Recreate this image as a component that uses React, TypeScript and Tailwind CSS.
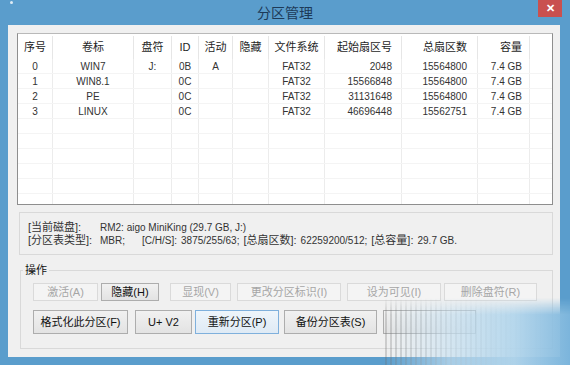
import React from "react";

const colClasses = [
  "w-[35px] justify-center",
  "w-[81px] justify-center",
  "w-[38px] justify-center",
  "w-[27px] justify-center",
  "w-[34px] justify-center",
  "w-[36px] justify-center",
  "w-[56px] justify-center",
  "w-[77px] justify-end pr-[9px]",
  "w-[76px] justify-end pr-[10px]",
  "w-[52px] justify-end pr-[7px]",
];

const headers = ["序号", "卷标", "盘符", "ID", "活动", "隐藏", "文件系统", "起始扇区号", "总扇区数", "容量"];

const rows = [
  ["0", "WIN7", "J:", "0B", "A", "", "FAT32", "2048", "15564800", "7.4 GB"],
  ["1", "WIN8.1", "", "0C", "", "", "FAT32", "15566848", "15564800", "7.4 GB"],
  ["2", "PE", "", "0C", "", "", "FAT32", "31131648", "15564800", "7.4 GB"],
  ["3", "LINUX", "", "0C", "", "", "FAT32", "46696448", "15562751", "7.4 GB"],
  ["", "", "", "", "", "", "", "", "", ""],
  ["", "", "", "", "", "", "", "", "", ""],
  ["", "", "", "", "", "", "", "", "", ""],
  ["", "", "", "", "", "", "", "", "", ""],
  ["", "", "", "", "", "", "", "", "", ""],
  ["", "", "", "", "", "", "", "", "", ""],
];

function Btn({
  label,
  w,
  h,
  kind = "normal",
}: {
  label: string;
  w: string;
  h: string;
  kind?: "normal" | "disabled" | "default";
}) {
  const look =
    kind === "disabled"
      ? "border-[#dadada] bg-[#f4f4f4] text-[#a6a6a6]"
      : kind === "default"
        ? "border-[#7fb0dc] bg-[linear-gradient(#eef5fb,#dfeaf5)] text-[#111]"
        : "border-[#adadad] bg-[linear-gradient(#f1f1f1,#e3e3e3)] text-[#111]";
  return (
    <button
      className={`${w} ${h} ${look} border flex items-center justify-center text-[11px] leading-none shrink-0`}
    >
      {label}
    </button>
  );
}

export default function App() {
  return (
    <div className="relative w-[570px] h-[365px] bg-[#5a9dcc] overflow-hidden font-['Liberation_Sans','Noto_Sans_CJK_SC',sans-serif] text-[#222]">
      {/* title bar */}
      <div className="h-[25px] grid grid-cols-[1fr_auto_1fr] items-start">
        <div className="pl-[10px] pt-[1px]">
          <div className="w-[3px] h-[3px] rounded-full bg-white/80" />
        </div>
        <div className="pt-[2px] text-[14px] leading-[20px] text-[#1d3a58] font-['Noto_Sans_CJK_SC',sans-serif]">
          分区管理
        </div>
        <div className="flex justify-end pr-[8px]">
          <div className="w-[24px] h-[17px] bg-[#c9504f] flex items-center justify-center text-white text-[11px] leading-none font-bold">
            ✕
          </div>
        </div>
      </div>

      {/* client area */}
      <div className="ml-[8px] mr-[10px] h-[332px] bg-[#f0f0f0] pl-[9px] pr-[7px] pt-[8px]">
        {/* list view */}
        <div className="h-[172px] border border-[#8e8e8e] border-t-[#b9b9b9] bg-white overflow-hidden">
          <div className="flex h-[25px] pt-[2px] text-[11px] text-[#1e1e1e]">
            {headers.map((h, i) => (
              <div key={i} className={`${colClasses[i]} flex items-center border-r border-[#e6e6e6]`}>
                {h}
              </div>
            ))}
            <div className="flex-1" />
          </div>
          {rows.map((r, ri) => (
            <div key={ri} className="flex h-[15px] text-[10px] text-[#333] border-b border-[#f4f4f4]">
              {r.map((c, ci) => (
                <div key={ci} className={`${colClasses[ci]} flex items-center border-r border-[#ececec]`}>
                  {c}
                </div>
              ))}
              <div className="flex-1" />
            </div>
          ))}
        </div>

        {/* disk info */}
        <div className="ml-[2px] mt-[7px] h-[43px] border border-[#d9d9d9] pl-[8px] pt-[8px] text-[11px] leading-[13px] text-[#333]">
          <div className="flex items-center whitespace-nowrap">
            <span className="w-[72px]">[当前磁盘]:</span>
            <span className="text-[10px]">RM2: aigo MiniKing (29.7 GB, J:)</span>
          </div>
          <div className="flex items-center whitespace-nowrap">
            <span className="w-[72px]">[分区表类型]:</span>
            <span className="w-[42px] text-[10px]">MBR;</span>
            <span className="text-[10px]">[C/H/S]:</span>
            <span className="text-[10px] ml-[4px]">3875/255/63;</span>
            <span className="ml-[4px]">[总扇区数]:</span>
            <span className="text-[10px] ml-[4px]">62259200/512;</span>
            <span className="ml-[4px]">[总容量]:</span>
            <span className="text-[10px] ml-[4px]">29.7 GB.</span>
          </div>
        </div>

        {/* operations */}
        <fieldset className="ml-[3px] mt-[8px] h-[86px] border border-[#d9d9d9] pl-[12px] pt-[6px]">
          <legend className="-ml-[10px] px-[2px] text-[11px] leading-[14px] text-[#111]">操作</legend>
          <div className="flex h-[18px]">
            <Btn label="激活(A)" w="w-[65px]" h="h-[18px]" kind="disabled" />
            <div className="ml-[3px]">
              <Btn label="隐藏(H)" w="w-[58px]" h="h-[18px]" />
            </div>
            <div className="ml-[11px]">
              <Btn label="显现(V)" w="w-[61px]" h="h-[18px]" kind="disabled" />
            </div>
            <div className="ml-[6px]">
              <Btn label="更改分区标识(I)" w="w-[104px]" h="h-[18px]" kind="disabled" />
            </div>
            <div className="ml-[6px]">
              <Btn label="设为可见(I)" w="w-[94px]" h="h-[18px]" kind="disabled" />
            </div>
            <div className="ml-[3px]">
              <Btn label="删除盘符(R)" w="w-[93px]" h="h-[18px]" kind="disabled" />
            </div>
          </div>
          <div className="flex mt-[9px]">
            <Btn label="格式化此分区(F)" w="w-[95px]" h="h-[24px]" />
            <div className="ml-[7px]">
              <Btn label="U+ V2" w="w-[57px]" h="h-[24px]" />
            </div>
            <div className="ml-[3px]">
              <Btn label="重新分区(P)" w="w-[84px]" h="h-[24px]" kind="default" />
            </div>
            <div className="ml-[5px]">
              <Btn label="备份分区表(S)" w="w-[93px]" h="h-[24px]" />
            </div>
            <div className="ml-[6px]">
              <Btn label="" w="w-[93px]" h="h-[24px]" />
            </div>
          </div>
        </fieldset>
      </div>

      {/* watermark haze over the lower right corner */}
      <div className="absolute left-[385px] top-[298px] w-[185px] h-[67px] [mask-image:linear-gradient(to_bottom,transparent_0%,black_25%)]">
        <div className="absolute inset-0 bg-[repeating-linear-gradient(90deg,rgba(110,110,110,0.28)_0px,rgba(110,110,110,0.28)_2px,rgba(255,255,255,0)_2px,rgba(255,255,255,0)_5px)] [mask-image:linear-gradient(to_right,black_0%,black_50%,transparent_90%)]" />
        <div className="absolute inset-0 bg-[linear-gradient(to_right,rgba(200,225,241,0)_0%,rgba(200,225,241,0.7)_35%,rgba(178,213,235,0.95)_70%,rgba(126,182,220,0.95)_100%)]" />
      </div>
    </div>
  );
}
